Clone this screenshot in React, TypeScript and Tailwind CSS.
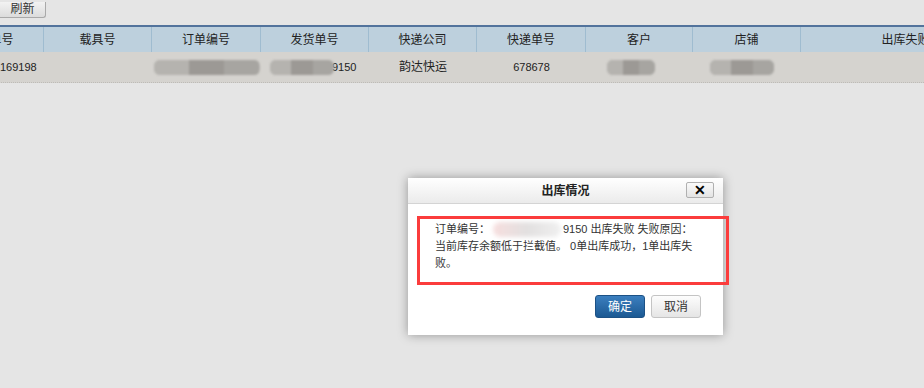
const font = { fontFamily: '"Liberation Sans", "Noto Sans CJK SC", sans-serif' };

const columns = ["出库单号", "载具号", "订单编号", "发货单号", "快递公司", "快递单号", "客户", "店铺", "出库失败原因"];

function Smudge({ w, dark = false }: { w: string; dark?: boolean }) {
  return (
    <div className={`h-[15px] ${w} rounded-[6px] blur-[1px] ${dark ? "bg-[#a3a19d]" : "bg-[#b4b2ae]"} flex overflow-hidden`}>
      <div className="flex-1 bg-[#b5b3af]" />
      <div className="flex-1 bg-[#9c9995]" />
      <div className="flex-1 bg-[#a7a5a1]" />
    </div>
  );
}

export default function App() {
  return (
    <div className="relative h-[388px] w-[924px] overflow-hidden bg-[#e5e5e5] text-[12px] text-[#222]" style={font}>
      <div className="h-[25px]">
        <button className="h-[16px] w-[46px] rounded-br-[3px] border-b border-r border-[#a9a9a9] bg-gradient-to-b from-[#f2f2f2] to-[#dcdcdc] text-[12px] leading-[14px] text-[#333]">
          刷新
        </button>
      </div>

      <div className="-ml-[64px] w-[1200px]">
        <div className="grid grid-cols-[108px_108px_109px_108px_108px_109px_107px_108px_234px] border-t-2 border-[#52739c] bg-[#bdd0dd]">
          {columns.map((c) => (
            <div key={c} className="flex h-[25px] items-center justify-center whitespace-nowrap border-r border-[#9fbcd0] text-[#222]">
              {c}
            </div>
          ))}
        </div>
        <div className="grid grid-cols-[108px_108px_109px_108px_108px_109px_107px_108px_234px] border-b border-dotted border-[#bdbbb7] bg-[#d5d3cf]">
          <div className="flex h-[30px] items-center whitespace-nowrap pl-[64px] text-[11px]">169198</div>
          <div />
          <div className="flex items-center justify-center">
            <Smudge w="w-[106px]" />
          </div>
          <div className="flex items-center pl-[9px]">
            <Smudge w="w-[64px]" />
            <span className="-ml-[2px] text-[11px]">9150</span>
          </div>
          <div className="flex items-center justify-center">韵达快运</div>
          <div className="flex items-center justify-center text-[11px]">678678</div>
          <div className="flex items-center pl-[21px]">
            <Smudge w="w-[48px]" dark />
          </div>
          <div className="flex items-center pl-[17px]">
            <Smudge w="w-[64px]" dark />
          </div>
          <div />
        </div>
      </div>

      <div className="absolute left-[408px] top-[178px] flex h-[157px] w-[315px] flex-col bg-white shadow-[0_0_10px_rgba(0,0,0,0.35)]">
        <div className="relative flex h-[26px] items-center justify-center border-b border-[#d4d4d4] bg-gradient-to-b from-white to-[#ebebeb]">
          <span className="font-bold text-[#222]">出库情况</span>
          <button className="absolute right-[9px] top-[4px] flex h-[16px] w-[28px] items-center justify-center rounded-[2px] border border-[#b0b0b0] bg-gradient-to-b from-[#fafafa] to-[#e4e4e4] text-[14px] font-bold leading-none text-black">
            ✕
          </button>
        </div>
        <div className="flex-1 whitespace-nowrap px-[27px] pt-[17px] text-[11px] leading-[17px] text-[#333]">
          <div className="flex items-center">
            <span>订单编号：</span>
            <span className="ml-[3px] h-[15px] w-[68px] shrink-0 rounded-[8px] bg-gradient-to-r from-[#f7dede] via-[#e2e0e0] to-[#f0f0f0] blur-[2px]" />
            <span className="ml-[2px]">9150 出库失败 失败原因：</span>
          </div>
          <div>当前库存余额低于拦截值。 0单出库成功，1单出库失</div>
          <div>败。</div>
        </div>
        <div className="flex justify-end gap-[6px] pb-[17px] pr-[22px]">
          <button className="h-[23px] w-[50px] rounded-[3px] border border-[#1c5185] bg-gradient-to-b from-[#3b7fbf] to-[#1b5993] text-white">
            确定
          </button>
          <button className="h-[23px] w-[50px] rounded-[3px] border border-[#c4c4c4] bg-gradient-to-b from-[#fdfdfd] to-[#e5e5e5] text-[#333]">
            取消
          </button>
        </div>
      </div>

      <div className="pointer-events-none absolute left-[417px] top-[216px] h-[69px] w-[312px] border-[3px] border-[#fb3c3c]" />
    </div>
  );
}
